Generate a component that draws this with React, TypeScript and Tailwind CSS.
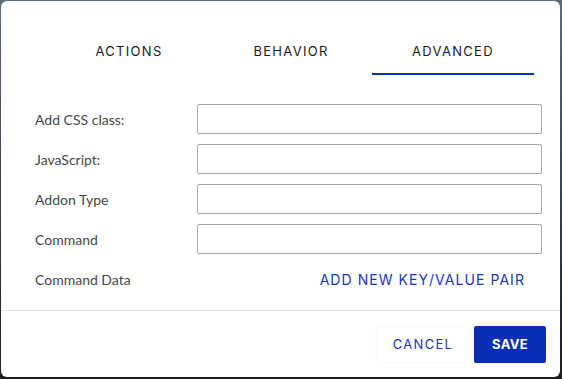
import { useState } from "react";

const tabs = ["ACTIONS", "BEHAVIOR", "ADVANCED"];

const fields = ["Add CSS class:", "JavaScript:", "Addon Type", "Command"];

export default function App() {
  const [active, setActive] = useState("ADVANCED");
  const [values, setValues] = useState<Record<string, string>>({});

  return (
    <div className="h-[379px] w-[562px] bg-gradient-to-b from-[#5b6b7c] via-[#3a4450] to-[#1b1e22] pl-[1px] pr-[2px] pt-[1px] pb-[2px]">
      <div className="flex h-full flex-col rounded-[6px] bg-white">
        {/* tabs */}
        <div className="ml-[47px] mt-[28px] flex w-[486px] font-['Inter',sans-serif] text-[13px] tracking-[0.1em] text-[#1a1a1a]">
          {tabs.map((t) => (
            <button
              key={t}
              onClick={() => setActive(t)}
              className={`flex h-[46px] flex-1 items-center justify-center border-b-2 pt-[2px] ${
                active === t ? "border-[#0d2fbd]" : "border-transparent"
              }`}
            >
              {t}
            </button>
          ))}
        </div>

        {/* form */}
        <div className="ml-[34px] mt-[29px] flex w-[507px] flex-col gap-[10px] font-['Lato',sans-serif] text-[14px] text-[#474747]">
          {fields.map((f) => (
            <div key={f} className="flex h-[30px] items-center">
              <label className="w-[162px] shrink-0 pt-[1px]">{f}</label>
              <input
                type="text"
                value={values[f] ?? ""}
                onChange={(e) =>
                  setValues((prev) => ({ ...prev, [f]: e.target.value }))
                }
                className="h-[30px] flex-1 rounded-[2px] border border-[#a3a3a3] bg-white px-2 outline-none"
              />
            </div>
          ))}
          <div className="flex h-[30px] items-center justify-between pt-[1px]">
            <span>Command Data</span>
            <button className="mr-[17px] font-['Inter',sans-serif] text-[14px] tracking-[0.075em] text-[#1636c4]">
              ADD NEW KEY/VALUE PAIR
            </button>
          </div>
        </div>

        {/* footer */}
        <div className="mt-[16px] border-t border-[#e3e3e3]" />
        <div className="flex flex-1 items-center justify-end gap-[5px] pr-[14px] font-['Inter',sans-serif] text-[13px]">
          <button className="h-[35px] w-[92px] rounded-[2px] bg-white pt-[1px] tracking-[0.1em] text-[#1636c4] shadow-[0_0_2px_rgba(0,0,0,0.08)]">
            CANCEL
          </button>
          <button className="h-[37px] w-[72px] rounded-[2px] bg-[#0b2eb8] pt-[1px] font-bold tracking-[0.03em] text-white">
            SAVE
          </button>
        </div>
      </div>
    </div>
  );
}
